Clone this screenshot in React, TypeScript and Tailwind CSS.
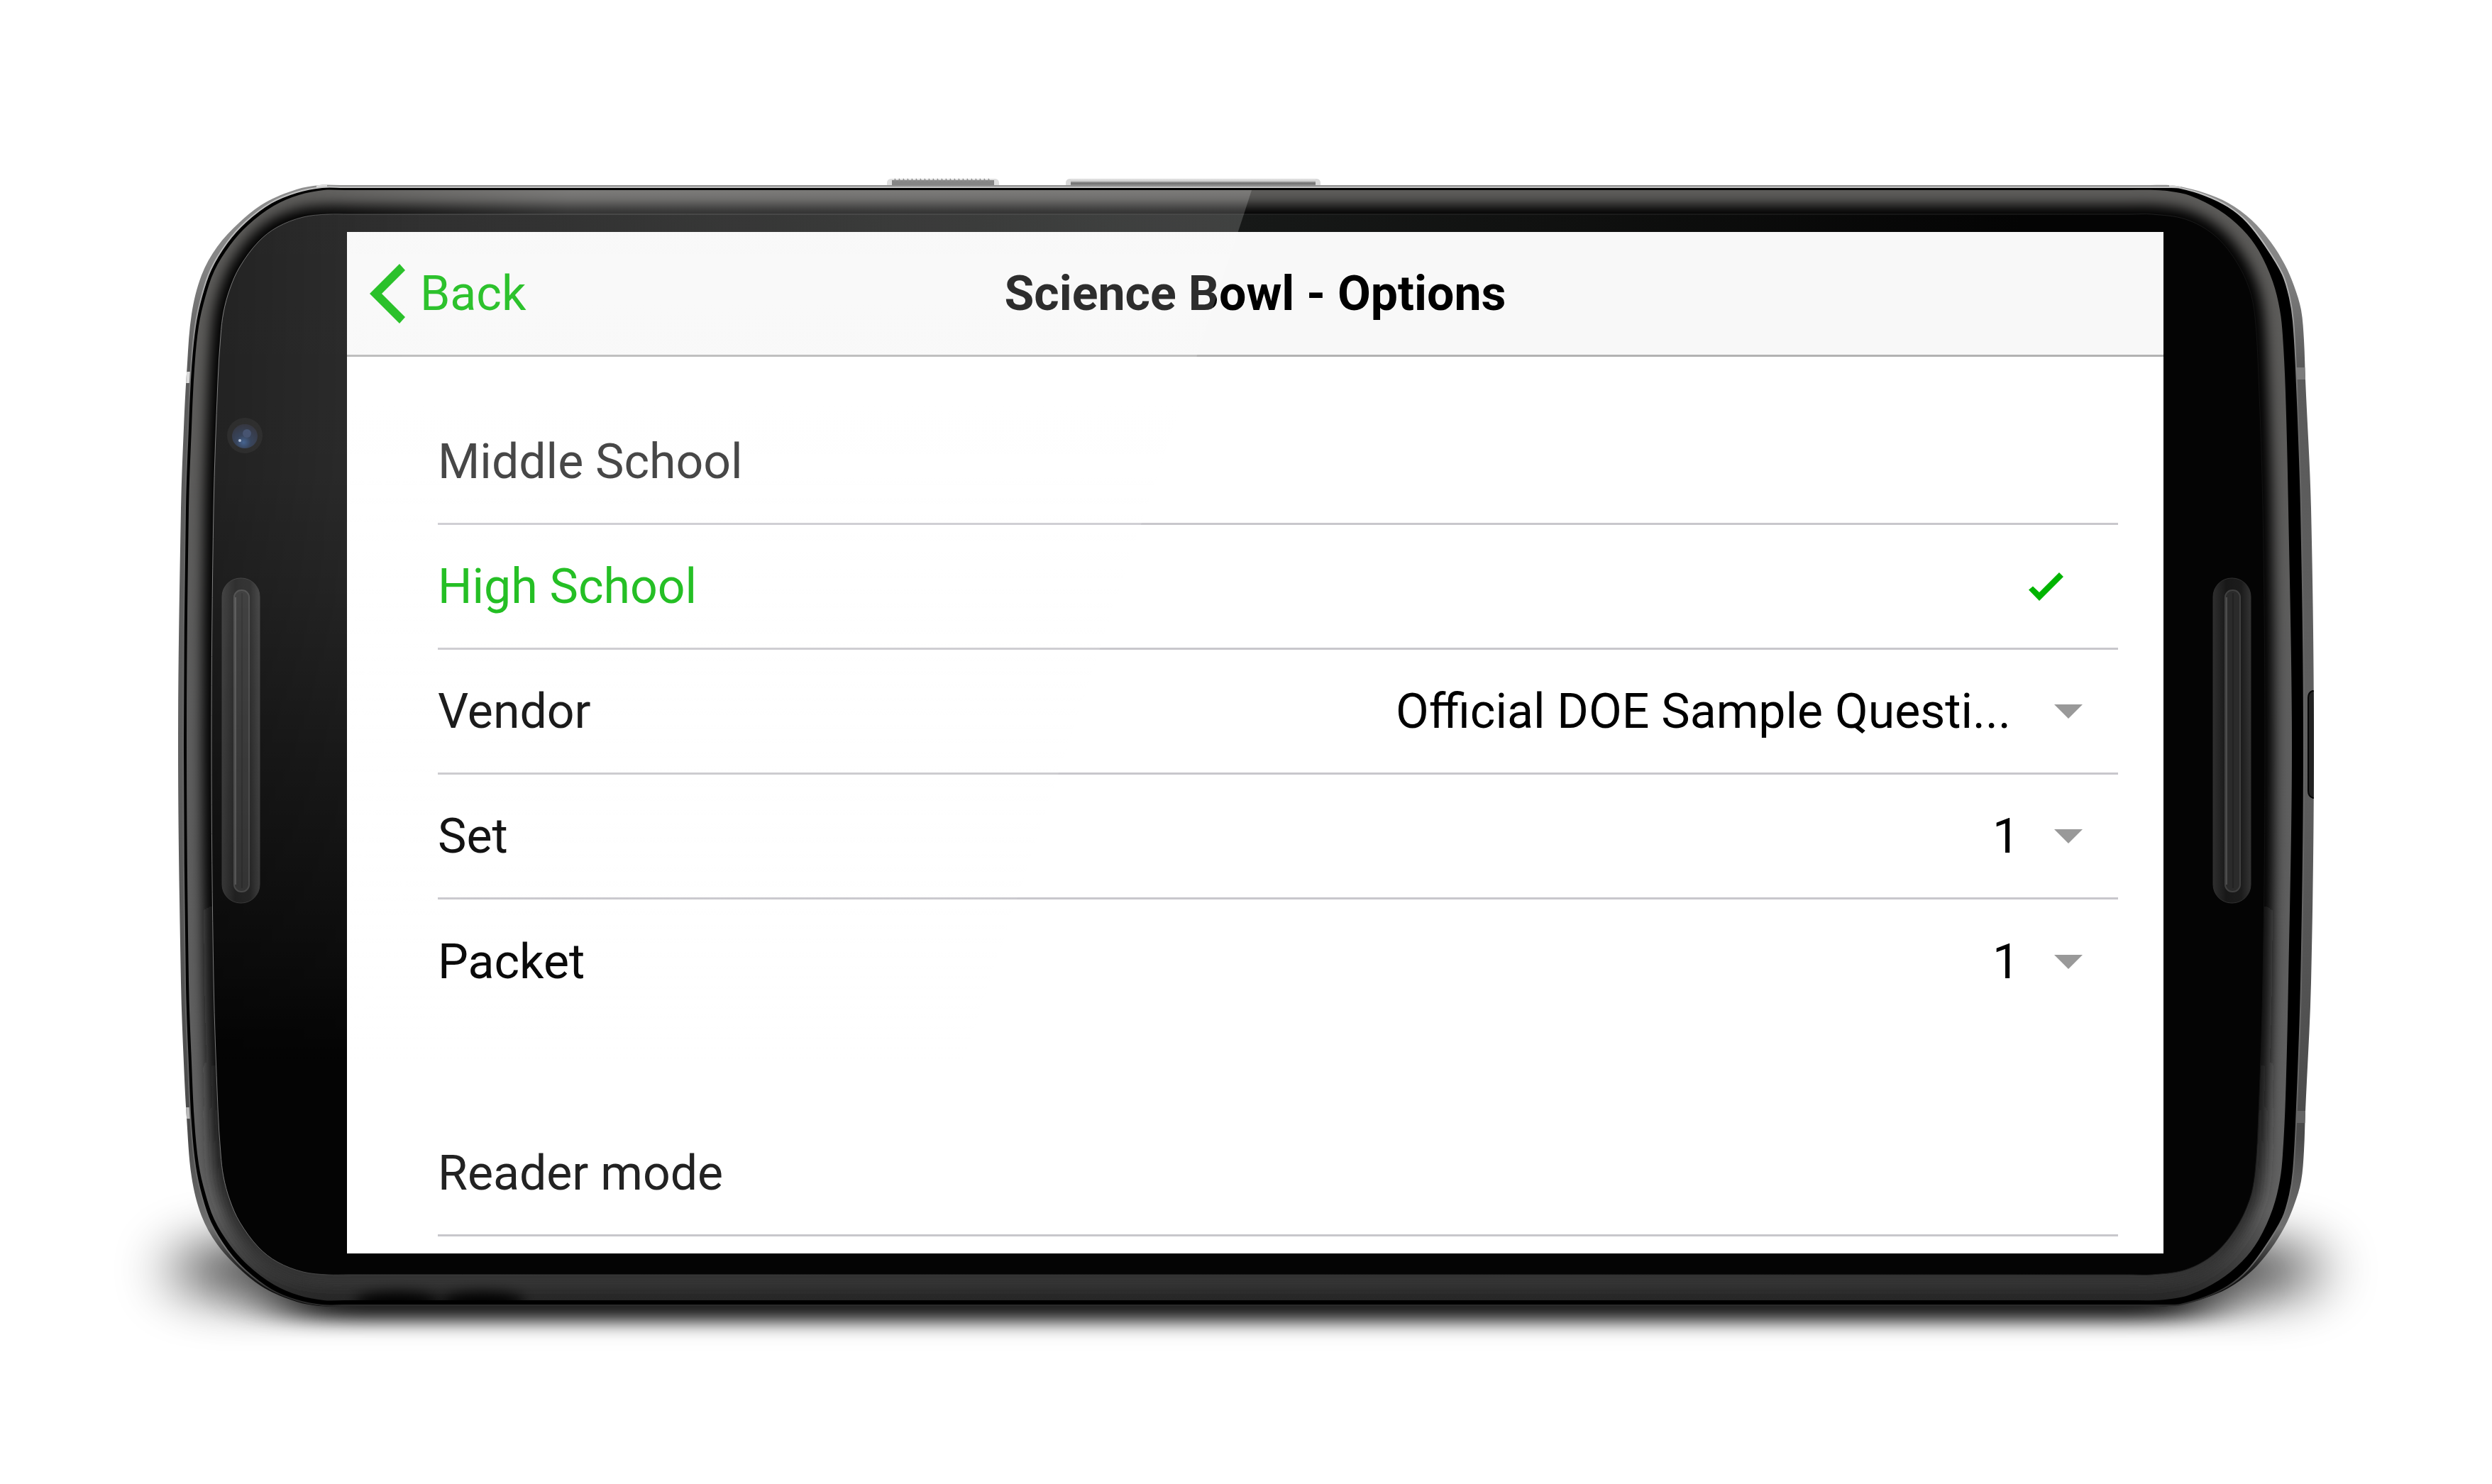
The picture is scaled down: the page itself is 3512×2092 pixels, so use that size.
import React, { useState } from "react";

function smooth(points: number[][]): string {
  const n = points.length;
  const at = (i: number) => points[(i + n) % n];
  let d = `M${points[0][0]} ${points[0][1]}`;
  for (let i = 0; i < n; i++) {
    const [p0, p1, p2, p3] = [at(i - 1), at(i), at(i + 1), at(i + 2)];
    const len = Math.hypot(p2[0] - p1[0], p2[1] - p1[1]);
    const t = (a: number[], b: number[]) => {
      const l = Math.hypot(b[0] - a[0], b[1] - a[1]) || 1;
      return [((b[0] - a[0]) / l) * len * 0.34, ((b[1] - a[1]) / l) * len * 0.34];
    };
    const t1 = t(p0, p2);
    const t2 = t(p1, p3);
    d += `C${(p1[0] + t1[0]).toFixed(1)} ${(p1[1] + t1[1]).toFixed(1)} ${(p2[0] - t2[0]).toFixed(1)} ${(p2[1] - t2[1]).toFixed(1)} ${p2[0]} ${p2[1]}`;
  }
  return d + "Z";
}

// Each contour lists its upper half, left middle to right middle; the lower half mirrors it.
function contour(upper: number[][], top: number, bottom: number): string {
  const lower = upper
    .slice(1, -1)
    .reverse()
    .map(([x, y]) => [x, top + bottom - y]);
  return smooth([...upper, ...lower]);
}

const BODY = contour(
  [
    [251, 1051], [255, 717], [259, 603], [263, 527], [270, 443], [284, 388], [306, 348], [337, 314], [373, 286], [418, 267], [450, 261], [480, 261],
    [3030, 261], [3057, 261], [3073, 263], [3107, 272], [3140, 286], [3173, 310], [3200, 341], [3220, 373], [3233, 403], [3243, 437], [3247, 480], [3249, 535], [3257, 717], [3261, 1051],
  ],
  261,
  1841,
);
const RING = contour(
  [
    [258, 1051], [261, 717], [265, 603], [269, 520], [275, 460], [284, 418], [297, 380], [320, 342], [346, 313], [382, 286], [418, 271], [454, 264], [484, 264],
    [3030, 264], [3057, 264], [3073, 265], [3107, 275], [3140, 291], [3167, 313], [3193, 347], [3217, 387], [3227, 420], [3232, 453], [3236, 520], [3243, 717], [3247, 1051],
  ],
  264,
  1840,
);
const BEVEL = contour(
  [
    [263, 1051], [266, 717], [270, 603], [274, 520], [280, 460], [289, 420], [302, 382], [324, 346], [350, 317], [386, 290], [421, 275], [456, 268], [486, 268],
    [3000, 268], [3037, 268], [3060, 270], [3087, 276], [3127, 296], [3160, 323], [3183, 353], [3203, 397], [3213, 437], [3217, 473], [3221, 553], [3225, 717], [3230, 1051],
  ],
  268,
  1833,
);
const GLASS = contour(
  [
    [298, 1051], [301, 717], [307, 537], [311, 473], [315, 440], [324, 407], [338, 376], [364, 341], [391, 320], [427, 306], [462, 302], [492, 302],
    [3003, 302], [3033, 302], [3080, 309], [3120, 331], [3150, 366], [3170, 407], [3178, 447], [3183, 530], [3189, 717], [3192, 1051],
  ],
  302,
  1797,
);

function Phone() {
  const teeth = Array.from({ length: 23 }, (_, i) => 1260 + i * 6);
  return (
    <svg
      className="absolute inset-0 size-full"
      viewBox="0 0 3512 2092"
      preserveAspectRatio="none"
      aria-hidden="true"
    >
      <defs>
        <filter id="soft" x="-20%" y="-150%" width="140%" height="400%">
          <feGaussianBlur stdDeviation="44 34" />
        </filter>
        <filter id="tight" x="-20%" y="-100%" width="140%" height="300%">
          <feGaussianBlur stdDeviation="50 12" />
        </filter>
        <filter id="haze" filterUnits="userSpaceOnUse" x="200" y="200" width="3100" height="1700">
          <feGaussianBlur stdDeviation="9" />
        </filter>
        <linearGradient id="metal" gradientUnits="userSpaceOnUse" x1="0" y1="261" x2="0" y2="1841">
          <stop offset="0" stopColor="#8f8f8f" />
          <stop offset="0.07" stopColor="#858585" />
          <stop offset="0.16" stopColor="#5a5a5a" />
          <stop offset="0.5" stopColor="#606060" />
          <stop offset="0.85" stopColor="#4a4a4a" />
          <stop offset="0.93" stopColor="#707070" />
          <stop offset="0.97" stopColor="#1a1a1a" />
          <stop offset="1" stopColor="#050505" />
        </linearGradient>
        <linearGradient id="edge" gradientUnits="userSpaceOnUse" x1="0" y1="261" x2="0" y2="1841">
          <stop offset="0" stopColor="#c4c4c4" />
          <stop offset="0.08" stopColor="#b4b4b4" />
          <stop offset="0.2" stopColor="#666" />
          <stop offset="0.86" stopColor="#666" />
          <stop offset="0.95" stopColor="#777" />
          <stop offset="0.99" stopColor="#2a2a2a" />
        </linearGradient>
        <linearGradient id="rim" gradientUnits="userSpaceOnUse" x1="0" y1="268" x2="0" y2="1833">
          <stop offset="0" stopColor="#5c5b59" />
          <stop offset="0.1" stopColor="#5c5b59" />
          <stop offset="0.5" stopColor="#5e5e5e" />
          <stop offset="0.92" stopColor="#606060" />
          <stop offset="1" stopColor="#262626" />
        </linearGradient>
        <linearGradient id="core" gradientUnits="userSpaceOnUse" x1="0" y1="268" x2="0" y2="1833">
          <stop offset="0" stopColor="#000" />
          <stop offset="0.55" stopColor="#000" />
          <stop offset="0.78" stopColor="#101010" />
          <stop offset="0.92" stopColor="#2c2c2c" />
          <stop offset="1" stopColor="#363636" />
        </linearGradient>
        <radialGradient id="glass" gradientUnits="userSpaceOnUse" cx="1750" cy="302" r="1100">
          <stop offset="0" stopColor="#171918" />
          <stop offset="0.4" stopColor="#101110" />
          <stop offset="1" stopColor="#040404" />
        </radialGradient>
        <linearGradient id="line" gradientUnits="userSpaceOnUse" x1="298" y1="0" x2="3192" y2="0">
          <stop offset="0" stopColor="#7a7a7a" />
          <stop offset="0.06" stopColor="#3c3c3c" />
          <stop offset="0.93" stopColor="#222" />
          <stop offset="1" stopColor="#111" />
        </linearGradient>
        <linearGradient id="well" x1="0" y1="0" x2="1" y2="0">
          <stop offset="0" stopColor="#2e2e2e" />
          <stop offset="0.35" stopColor="#181818" />
          <stop offset="0.75" stopColor="#1c1c1c" />
          <stop offset="1" stopColor="#333" />
        </linearGradient>
        <linearGradient id="key" x1="0" y1="0" x2="0" y2="1">
          <stop offset="0" stopColor="#ececec" />
          <stop offset="0.4" stopColor="#b5b5b5" />
          <stop offset="0.6" stopColor="#6f6f6f" />
          <stop offset="1" stopColor="#8a8a8a" />
        </linearGradient>
        <radialGradient id="lens" cx="0.45" cy="0.75" r="0.7">
          <stop offset="0" stopColor="#2b4d80" />
          <stop offset="0.4" stopColor="#1b2a45" />
          <stop offset="1" stopColor="#191b28" />
        </radialGradient>
        <clipPath id="bevelClip">
          <path d={BEVEL} />
        </clipPath>
        <clipPath id="bodyClip">
          <path d={BODY} />
        </clipPath>
      </defs>

      <rect x="250" y="1750" width="3012" height="80" rx="40" fill="#000" opacity="0.65" filter="url(#soft)" />
      <rect x="390" y="1760" width="2730" height="102" rx="40" fill="#000" opacity="0.85" filter="url(#tight)" />

      <g>
        <path d="M1250 261V257Q1251 252 1256 252H1402Q1407 252 1408 257V261Z" fill="#dedede" />
        <rect x="1257" y="254" width="144" height="7" fill="#858585" />
        {teeth.map((x) => (
          <path key={x} d={`M${x} 256L${x + 1} 251L${x + 4} 256Z`} fill="#8c8c8c" />
        ))}
        <path d="M1502 261V257Q1503 252 1508 252H1855Q1860 252 1861 257V261Z" fill="#d8d8d8" />
        <rect x="1509" y="253" width="345" height="8" fill="url(#key)" />
      </g>

      <path d={BODY} fill="url(#metal)" />
      <g clipPath="url(#bodyClip)">
        <g fill="#dcdcdc">
          <rect x="446" y="258" width="15" height="8" />
          <rect x="3057" y="258" width="16" height="9" />
          <rect x="255" y="524" width="14" height="16" />
          <rect x="255" y="1561" width="14" height="16" fill="#b8b8b8" />
        </g>
        <g fill="#7c7c7c">
          <rect x="3230" y="518" width="24" height="17" />
          <rect x="3230" y="1566" width="24" height="17" fill="#646464" />
        </g>
        <path d="M3270 974H3259Q3253 976 3253 984V1115Q3253 1123 3260 1125H3270Z" fill="#222" stroke="#050505" strokeWidth="2" />
      </g>
      <path d={RING} fill="#000" stroke="url(#edge)" strokeWidth="2" />
      <path d={BEVEL} fill="url(#rim)" />
      <g clipPath="url(#bevelClip)">
        <path d={GLASS} fill="url(#core)" stroke="url(#core)" strokeWidth="26" filter="url(#haze)" />
        <ellipse cx="560" cy="1836" rx="60" ry="14" fill="#000" filter="url(#haze)" />
        <ellipse cx="680" cy="1836" rx="60" ry="14" fill="#000" filter="url(#haze)" />
      </g>
      <path d={GLASS} fill="url(#glass)" stroke="url(#line)" strokeWidth="1" />

      <circle cx="345" cy="614" r="25" fill="#101010" />
      <ellipse cx="345" cy="615" rx="18" ry="17" fill="url(#lens)" />
      <circle cx="348" cy="611" r="6" fill="#2c3b5c" />
      <circle cx="338" cy="621" r="2" fill="#a9b9d2" />

      {[313, 3119].map((x) => (
        <g key={x}>
          <rect x={x} y="815" width="53" height="458" rx="26" fill="url(#well)" stroke="#303030" />
          <rect x={x + 17} y="832" width="21" height="425" rx="10" fill="#2b2b2b" stroke="#404040" strokeWidth="2" />
          <path d={`M${x + 19} 842V1247`} stroke="#4c4c4c" strokeWidth="2" />
          <path d={`M${x + 28} 836V1252`} stroke="#222" strokeWidth="2" />
        </g>
      ))}
    </svg>
  );
}

function Glare() {
  return (
    <svg
      className="pointer-events-none absolute inset-0 size-full"
      viewBox="0 0 3512 2092"
      preserveAspectRatio="none"
      aria-hidden="true"
    >
      <defs>
        <linearGradient id="shine" gradientUnits="userSpaceOnUse" x1="0" y1="302" x2="0" y2="1500">
          <stop offset="0" stopColor="#fff" stopOpacity="0.18" />
          <stop offset="0.3" stopColor="#fff" stopOpacity="0.17" />
          <stop offset="0.44" stopColor="#fff" stopOpacity="0.145" />
          <stop offset="0.58" stopColor="#fff" stopOpacity="0.11" />
          <stop offset="0.73" stopColor="#fff" stopOpacity="0.075" />
          <stop offset="0.88" stopColor="#fff" stopOpacity="0.04" />
          <stop offset="1" stopColor="#fff" stopOpacity="0" />
        </linearGradient>
        <linearGradient id="sweep" gradientUnits="userSpaceOnUse" x1="290" y1="0" x2="600" y2="0">
          <stop offset="0" stopColor="#fff" stopOpacity="0.7" />
          <stop offset="1" stopColor="#fff" />
        </linearGradient>
        <linearGradient id="brow" gradientUnits="userSpaceOnUse" x1="400" y1="0" x2="800" y2="0">
          <stop offset="0" stopColor="#fff" stopOpacity="0" />
          <stop offset="1" stopColor="#fff" stopOpacity="0.18" />
        </linearGradient>
        <mask id="fade" maskUnits="userSpaceOnUse" x="0" y="0" width="3512" height="2092">
          <rect x="0" y="0" width="3512" height="2092" fill="url(#sweep)" />
        </mask>
        <clipPath id="pane">
          <path d={GLASS} />
        </clipPath>
      </defs>
      <path d="M400 268H1764L1753 302H400Z" fill="url(#brow)" />
      <g clipPath="url(#pane)">
        <path d="M280 302H1753L1356 1500H280Z" fill="url(#shine)" mask="url(#fade)" />
      </g>
    </svg>
  );
}

const ROW = "flex h-[176px] items-center border-b-3 border-[#c8c7cc] pr-[50px] last:border-b-0";

function Choice(props: { label: string; checked: boolean; onPick: () => void }) {
  return (
    <label className={ROW}>
      <span className={props.checked ? "flex-1 text-[#00b500]" : "flex-1 text-[#222]"}>{props.label}</span>
      <input
        type="radio"
        name="level"
        className="sr-only"
        checked={props.checked}
        onChange={props.onPick}
      />
      {props.checked && (
        <svg className="mr-[27px] h-[40px] w-[49px]" viewBox="0 0 49 40" aria-hidden="true">
          <path d="M0 24.500L6 19.500L15 28L43 0L49 6L15 40Z" fill="#00b400" />
        </svg>
      )}
    </label>
  );
}

function Picker(props: { id: string; label: string; options: string[] }) {
  return (
    <div className={ROW}>
      <label htmlFor={props.id} className="flex-1">
        {props.label}
      </label>
      <select
        id={props.id}
        className={
          props.id === "vendor"
            ? "mr-[48px] h-[88px] w-[880px] appearance-none bg-transparent text-black outline-none"
            : "mr-[48px] h-[88px] appearance-none bg-transparent text-black outline-none"
        }
      >
        {props.options.map((o) => (
          <option key={o}>{o}</option>
        ))}
      </select>
      <svg className="h-[20px] w-[40px]" viewBox="0 0 40 20" aria-hidden="true">
        <path d="M0 0H40L20 20Z" fill="#999" />
      </svg>
    </div>
  );
}

export default function App() {
  const [level, setLevel] = useState("High School");
  return (
    <main className="relative flex min-h-screen flex-col bg-white pt-[327px] pr-[463px] pb-[325px] pl-[489px] font-[Roboto,sans-serif] text-[68px] leading-[80px] text-black">
      <Phone />
      <section className="relative flex-1 overflow-hidden bg-white pb-[24px]">
        <header className="grid h-[176px] grid-cols-[1fr_auto_1fr] items-center border-b-3 border-[#b2b2b2] bg-[#f8f8f8] px-[32px]">
          <button type="button" className="flex items-center gap-[21px] text-[#00b500]">
            <svg className="h-[84px] w-[50px]" viewBox="0 0 50 84" aria-hidden="true">
              <path d="M42 0L50 9L17 42L50 75L42 84L0 42Z" fill="#00b500" />
            </svg>
            Back
          </button>
          <h1 className="font-bold">Science Bowl - Options</h1>
        </header>
        <div className="mt-[61px] pr-[64px] pl-[128px]">
          {["Middle School", "High School"].map((name) => (
            <Choice key={name} label={name} checked={level === name} onPick={() => setLevel(name)} />
          ))}
          <Picker id="vendor" label="Vendor" options={["Official DOE Sample Questi..."]} />
          <Picker id="set" label="Set" options={["1"]} />
          <Picker id="packet" label="Packet" options={["1"]} />
        </div>
        <div className="mt-[123px] pr-[64px] pl-[128px]">
          <div className="flex h-[176px] items-center border-b-3 border-[#c8c7cc] text-[#222]">Reader mode</div>
        </div>
      </section>
      <Glare />
    </main>
  );
}
